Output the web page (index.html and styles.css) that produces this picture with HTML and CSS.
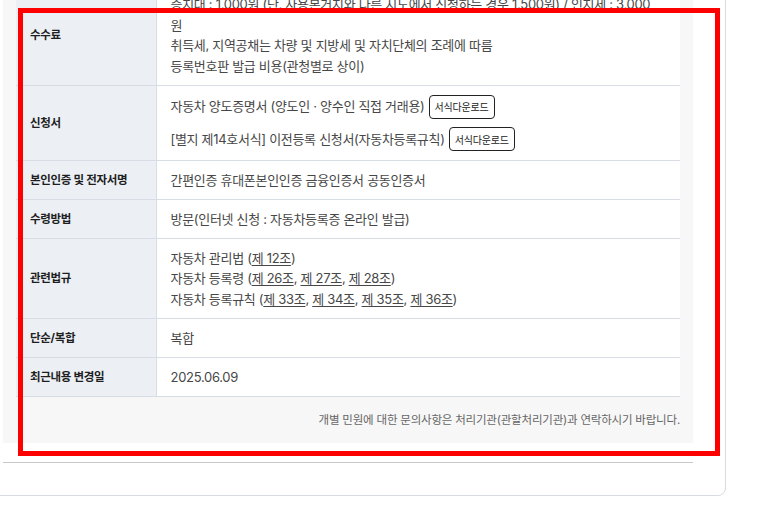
FILE: index.html
```html
<!DOCTYPE html>
<html lang="ko">
<head>
  <meta charset="UTF-8">
  <meta name="viewport" content="width=device-width, initial-scale=1.0">
  <title>민원안내</title>
  <link rel="stylesheet" href="styles.css">
</head>
<body>
  <div class="card">
    <div class="panel">
      <table class="info">
        <colgroup>
          <col class="col-label">
          <col>
        </colgroup>
        <tbody>
          <tr>
            <th>수수료</th>
            <td>
              증지대 : 1,000원 (단, 사용본거지와 다른 시도에서 신청하는 경우 1,500원) / 인지세 : 3,000<br>
              원<br>
              취득세, 지역공채는 차량 및 지방세 및 자치단체의 조례에 따름<br>
              등록번호판 발급 비용(관청별로 상이)
            </td>
          </tr>
          <tr>
            <th>신청서</th>
            <td>
              <div class="forms">
                <div class="form-line">
                  자동차 양도증명서 (양도인 · 양수인 직접 거래용)
                  <button type="button" class="btn-down">서식다운로드</button>
                </div>
                <div class="form-line">
                  [별지 제14호서식] 이전등록 신청서(자동차등록규칙)
                  <button type="button" class="btn-down">서식다운로드</button>
                </div>
              </div>
            </td>
          </tr>
          <tr>
            <th>본인인증 및 전자서명</th>
            <td>간편인증 휴대폰본인인증 금융인증서 공동인증서</td>
          </tr>
          <tr>
            <th>수령방법</th>
            <td>방문(인터넷 신청 : 자동차등록증 온라인 발급)</td>
          </tr>
          <tr>
            <th>관련법규</th>
            <td>
              자동차 관리법 (<a href="#">제 12조</a>)<br>
              자동차 등록령 (<a href="#">제 26조</a>, <a href="#">제 27조</a>, <a href="#">제 28조</a>)<br>
              자동차 등록규칙 (<a href="#">제 33조</a>, <a href="#">제 34조</a>, <a href="#">제 35조</a>, <a href="#">제 36조</a>)
            </td>
          </tr>
          <tr>
            <th>단순/복합</th>
            <td>복합</td>
          </tr>
          <tr>
            <th>최근내용 변경일</th>
            <td>2025.06.09</td>
          </tr>
        </tbody>
      </table>
      <p class="notice">개별 민원에 대한 문의사항은 처리기관(관할처리기관)과 연락하시기 바랍니다.</p>
    </div>
    <hr class="divider">
  </div>

  <!-- highlight box -->
  <div class="highlight"></div>
</body>
</html>
```

FILE: styles.css
```css
body {
  margin: 0;
  padding: 0;
  background: #ffffff;
  font-family: "Inter", "Noto Sans CJK KR", sans-serif;
  color: #444;
  overflow: hidden;
}

.card {
  width: 756px;
  box-sizing: border-box;
  margin: -61px 0 0 -30px;
  padding: 32px;
  background: #fff;
  border: 1px solid #d8dbe3;
  border-radius: 8px;
}

.panel {
  background: #f7f7f7;
  padding: 13px 13px 0;
}

.info {
  width: 100%;
  border-collapse: collapse;
  table-layout: fixed;
  background: #fff;
}

.col-label {
  width: 140px;
}

.info th,
.info td {
  border-bottom: 1px solid #d8dce4;
  padding: 9px 14px 8.5px;
  vertical-align: middle;
  line-height: 20.5px;
}

.info th {
  background: #ecf0f5;
  border-right: 1px solid #d8dce4;
  text-align: left;
  font-size: 11.5px;
  font-weight: bold;
  color: #1e1e1e;
  letter-spacing: -0.3px;
}

.info td {
  font-size: 13px;
  color: #474747;
  letter-spacing: -0.3px;
}

.info a {
  color: #474747;
  text-decoration: underline;
  text-underline-offset: 2px;
}

.forms {
  display: flex;
  flex-direction: column;
  gap: 8.5px;
}

.form-line {
  display: flex;
  align-items: center;
  gap: 4px;
  height: 24px;
}

.btn-down {
  height: 24px;
  padding: 0 5px;
  background: #fff;
  border: 1px solid #222;
  border-radius: 4px;
  font-family: "Noto Sans CJK KR", sans-serif;
  font-size: 10px;
  letter-spacing: -0.2px;
  color: #222;
  cursor: pointer;
}

.notice {
  margin: 0;
  padding: 14px 0;
  text-align: right;
  font-size: 11.5px;
  line-height: 18px;
  color: #666;
  letter-spacing: -0.2px;
}

.divider {
  margin: 19px 0 0;
  border: none;
  border-top: 1px solid #c8c8c8;
}

.highlight {
  position: absolute;
  left: 18px;
  top: 8px;
  width: 702px;
  height: 448px;
  box-sizing: border-box;
  border: 5px solid #ff0000;
  pointer-events: none;
}
```
